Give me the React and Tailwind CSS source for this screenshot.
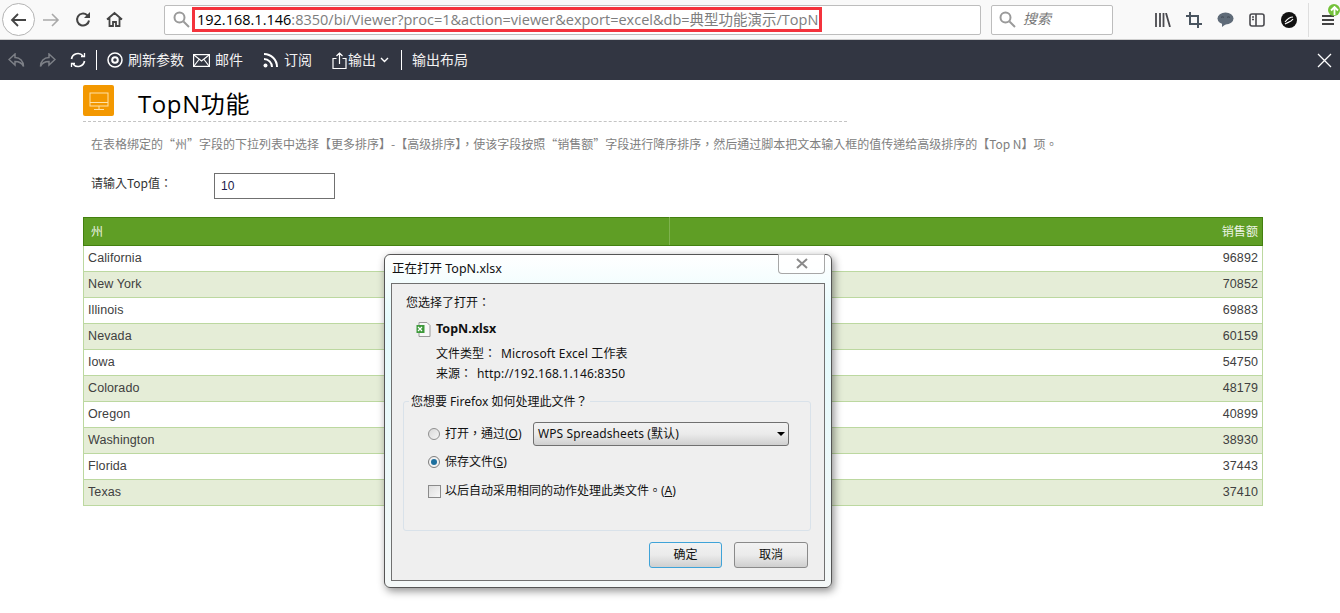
import { useState } from 'react';

const FONT = "font-['Liberation_Sans','Noto_Sans_CJK_SC',sans-serif]";

const rows = [
  ['California', '96892'],
  ['New York', '70852'],
  ['Illinois', '69883'],
  ['Nevada', '60159'],
  ['Iowa', '54750'],
  ['Colorado', '48179'],
  ['Oregon', '40899'],
  ['Washington', '38930'],
  ['Florida', '37443'],
  ['Texas', '37410'],
];

const BrowserBar = () => (
  <div className="h-10 bg-[#f9f9f9] border-b border-[#cfcfcf] flex items-center relative shrink-0">
    {/* nav buttons */}
    <div className="ml-[2px] w-[33px] h-[33px] rounded-full border border-[#b4b4b4] bg-white flex items-center justify-center">
      <svg width="18" height="18" viewBox="0 0 18 18" fill="none" stroke="#444" strokeWidth="1.8"><path d="M16 9H2M8 3 2 9l6 6" /></svg>
    </div>
    <svg className="ml-[7px]" width="18" height="18" viewBox="0 0 18 18" fill="none" stroke="#a9a9a9" strokeWidth="1.6"><path d="M1 9h15M10 3l6 6-6 6" /></svg>
    <svg className="ml-[15px]" width="17" height="17" viewBox="0 0 17 17" fill="none" stroke="#444" strokeWidth="2"><path d="M14 9.5A6 6 0 1 1 12 4l2.5 2" /><path d="M15 1v6H9" fill="#444" stroke="none" /></svg>
    <svg className="ml-[14px]" width="17" height="17" viewBox="0 0 17 17" fill="none" stroke="#444" strokeWidth="1.8"><path d="M1 8.5 8.5 2 16 8.5M3.5 7v8h3.5v-4h3v4h3.5V7" /></svg>

    {/* url box */}
    <div className="ml-[41px] w-[817px] h-[30px] bg-white border border-[#bdbdbd] rounded-[2px] flex items-center">
      <svg className="ml-[8px] shrink-0" width="17" height="17" viewBox="0 0 17 17" fill="none" stroke="#9a9a9a" strokeWidth="2"><circle cx="6.5" cy="6.5" r="5" /><path d="m10.5 10.5 5.5 5.5" /></svg>
      <div className="ml-[2px] w-[630px] h-[25px] border-[3px] border-[#f4333c] flex items-center pl-[2px] font-['Open_Sans','Noto_Sans_CJK_SC',sans-serif] text-[14.5px] whitespace-nowrap overflow-hidden text-[#7d7d7d]">
        <span className="text-black">192.168.1.146</span>:8350/bi/Viewer?proc=1&amp;action=viewer&amp;export=excel&amp;db=典型功能演示/TopN
      </div>
    </div>

    {/* search box */}
    <div className="ml-[10px] w-[122px] h-[30px] bg-white border border-[#bdbdbd] rounded-[2px] flex items-center">
      <svg className="ml-[7px]" width="17" height="17" viewBox="0 0 17 17" fill="none" stroke="#9a9a9a" strokeWidth="2"><circle cx="6.5" cy="6.5" r="5" /><path d="m10.5 10.5 5.5 5.5" /></svg>
      <span className="ml-[7px] italic text-[14px] text-[#777]">搜索</span>
    </div>

    {/* right icons */}
    <svg className="ml-[42px]" width="16" height="14" viewBox="0 0 16 14" fill="none" stroke="#4a4a4f" strokeWidth="1.8"><path d="M1 0v14M5 0v14M8.5 0v14M11 0l4 14" /></svg>
    <svg className="ml-[15px]" width="16" height="16" viewBox="0 0 16 16" fill="none" stroke="#4a5560" strokeWidth="2"><path d="M4 0v12h12M0 4h12v12" /></svg>
    <svg className="ml-[15px]" width="17" height="15" viewBox="0 0 17 15"><ellipse cx="8.5" cy="6.5" rx="8" ry="6" fill="#5f6b78" /><path d="M5 11v4l4-3z" fill="#5f6b78" /><path d="M4 5.500c1-.8 2-.8 3 0M10 5.500c1-.8 2-.8 3 0" stroke="#3d4650" fill="none" /></svg>
    <svg className="ml-[15px]" width="16" height="14" viewBox="0 0 16 14" fill="none" stroke="#4a4a4f" strokeWidth="1.6"><rect x="1" y="1" width="14" height="12" rx="2" /><path d="M7 1v12M3 4h2M3 6.5h2" /></svg>
    <svg className="ml-[16px]" width="16" height="16" viewBox="0 0 16 16"><circle cx="8" cy="8" r="8" fill="#111" /><path d="M4 10c3-4 5-5 8-5M4 12c3-2 6-2 8-5" stroke="#fff" strokeWidth="1.2" fill="none" /></svg>
    <div className="ml-[11px] w-px h-[34px] bg-[#dedede]" />
    <svg className="ml-[13px]" width="12" height="12" viewBox="0 0 12 12" stroke="#444" strokeWidth="2"><path d="M0 2h12M0 6h12M0 10h12" /></svg>
    <span className="absolute right-0 top-[4px] w-[12px] h-[12px] rounded-full bg-[#74c23a] flex items-center justify-center">
      <svg width="9" height="9" viewBox="0 0 9 9" fill="none" stroke="#fff" strokeWidth="1.8"><path d="M4.5 9V1M1 4.5 4.5 1 8 4.5" /></svg>
    </span>
  </div>
);

const ToolLabel = ({ children, className = '' }) => (
  <span className={`text-[14px] text-[#f2f2f2] whitespace-nowrap ${className}`}>{children}</span>
);

const ViewerBar = () => (
  <div className="h-10 bg-[#323642] flex items-center shrink-0">
    <svg className="ml-[8px]" width="17" height="15" viewBox="0 0 17 15" fill="none" stroke="#7d8087" strokeWidth="1.5"><path d="M7 1 1 6.5 7 12V8.5c4 0 7 1.500 8.500 5C15.500 8 12 4.500 7 4.500z" /></svg>
    <svg className="ml-[14px]" width="17" height="15" viewBox="0 0 17 15" fill="none" stroke="#7d8087" strokeWidth="1.5"><path d="M10 1l6 5.500L10 12V8.500c-4 0-7 1.500-8.500 5C1.500 8 5 4.500 10 4.500z" /></svg>
    <svg className="ml-[14px]" width="16" height="16" viewBox="0 0 16 16" fill="none" stroke="#fff" strokeWidth="1.7"><path d="M1.500 7A6.500 6.500 0 0 1 13 4M14.500 9A6.500 6.500 0 0 1 3 12" /><path d="M11 4.500h3.500V1M5 11.500H1.500V15" strokeWidth="1.300" /></svg>
    <div className="ml-[10px] w-px h-5 bg-white" />
    <svg className="ml-[10px]" width="16" height="16" viewBox="0 0 16 16" fill="none" stroke="#fff" strokeWidth="1.500"><circle cx="8" cy="8" r="7" /><circle cx="8" cy="8" r="2.800" strokeWidth="2" /></svg>
    <ToolLabel className="ml-[5px]">刷新参数</ToolLabel>
    <svg className="ml-[9px]" width="17" height="13" viewBox="0 0 17 13" fill="none" stroke="#fff" strokeWidth="1.200"><rect x="0.600" y="0.600" width="15.800" height="11.800" /><path d="m1 1 7.500 6L16 1M1 12l5-6.500M16 12l-5-6.500" /></svg>
    <ToolLabel className="ml-[5px]">邮件</ToolLabel>
    <svg className="ml-[20px]" width="16" height="16" viewBox="0 0 16 16" fill="none" stroke="#fff" strokeWidth="2"><circle cx="2.500" cy="13.500" r="2" fill="#fff" stroke="none" /><path d="M1 7a8 8 0 0 1 8 8M1 2a13 13 0 0 1 13 13" /></svg>
    <ToolLabel className="ml-[5px]">订阅</ToolLabel>
    <svg className="ml-[20px]" width="15" height="17" viewBox="0 0 15 17" fill="none" stroke="#fff" strokeWidth="1.200"><path d="M4.500 6.500H1v10h13v-10h-3.500M7.500 12V1M4.500 4l3-3 3 3" /></svg>
    <ToolLabel className="ml-[1px]">输出</ToolLabel>
    <svg className="ml-[4px]" width="9" height="6" viewBox="0 0 9 6" fill="none" stroke="#fff" strokeWidth="1.400"><path d="m1 1 3.500 3.500L8 1" /></svg>
    <div className="ml-[12px] w-px h-5 bg-white" />
    <ToolLabel className="ml-[10px]">输出布局</ToolLabel>
    <svg className="ml-auto mr-[8px]" width="15" height="15" viewBox="0 0 15 15" stroke="#fff" strokeWidth="1.300"><path d="m1 1 13 13M14 1 1 14" /></svg>
  </div>
);

const Report = () => {
  const [top, setTop] = useState('10');
  return (
    <div className="pl-[83px] pr-[77px] pt-[5px]">
      <div className="w-[764px] h-[37px] border-b border-dashed border-[#c4c4c4] flex items-start">
        <div className="w-[31px] h-[31px] bg-[#f39800] rounded-[2px] flex items-center justify-center">
          <svg width="20" height="20" viewBox="0 0 20 20" fill="none" stroke="#ffe2a8" strokeWidth="1"><rect x="1" y="2" width="18" height="13" /><path d="M1 11.500h18M10 15v3M5 18.500h10" /></svg>
        </div>
        <h1 className="ml-[24px] mt-[2px] font-['Open_Sans','Noto_Sans_CJK_SC',sans-serif] text-[24px] tracking-[0.6px] leading-[34px] text-black">TopN功能</h1>
      </div>
      <p className="ml-[8px] mt-[13px] font-['Noto_Sans_CJK_TC',sans-serif] text-[12px] leading-[17px] text-[#808080] whitespace-nowrap">
        在表格绑定的“州”字段的下拉列表中选择【更多排序】-【高级排序】，使该字段按照“销售额”字段进行降序排序，然后通过脚本把文本输入框的值传递给高级排序的【Top N】项。
      </p>
      <div className="mt-[21px] h-[26px] flex items-start">
        <label className="ml-[8px] w-[123px] font-['Noto_Sans_CJK_TC',sans-serif] text-[12px] leading-[20px] text-[#333]">请输入Top值：</label>
        <input
          value={top}
          onChange={(e) => setTop(e.target.value)}
          className="w-[121px] h-[26px] border border-[#707070] pl-[6px] text-[12px] text-[#1a1a4a] outline-none"
        />
      </div>
      <table className="mt-[18px] w-[1180px] border-collapse text-[12.5px] tracking-[0.1px] text-[#404040] table-fixed">
        <thead>
          <tr className="h-[28px] bg-[#5f9e25] text-[#eef5e5] text-[12px]">
            <th className="w-[586px] border border-[#43800f] border-r-[#7fb24e] pl-[7px] text-left font-normal">州</th>
            <th className="border border-[#43800f] border-l-[#7fb24e] pr-[4px] text-right font-normal">销售额</th>
          </tr>
        </thead>
        <tbody>
          {rows.map(([state, amount], i) => (
            <tr key={state} className={`h-[26px] ${i % 2 ? 'bg-[#e5edd7]' : 'bg-white'}`}>
              <td className="border border-[#bcd8a0] border-r-0 pl-[4px]">{state}</td>
              <td className="border border-[#bcd8a0] border-l-0 pr-[4px] text-right">{amount}</td>
            </tr>
          ))}
        </tbody>
      </table>
    </div>
  );
};

const DialogButton = ({ children, primary }) => (
  <button className={`h-[26px] rounded-[3px] border text-[12px] text-[#111] bg-gradient-to-b from-[#f2f2f2] via-[#ebebeb] to-[#cfcfcf] ${primary ? 'border-[#3fa3d8] w-[73px]' : 'border-[#8a8a8a] w-[74px]'}`}>
    {children}
  </button>
);

const Dialog = () => (
  <div className="absolute left-[384px] top-[254px] w-[448px] h-[334px] rounded-[6px] border border-[#555] shadow-[2px_3px_8px_rgba(0,0,0,0.45)] bg-gradient-to-b from-white via-[#e4fbfd] via-20% to-[#f4f8f8] flex flex-col px-[6px] pb-[6px] font-['Noto_Sans','Noto_Sans_CJK_TC',sans-serif]">
    {/* title bar */}
    <div className="h-[28px] shrink-0 flex items-start relative">
      <span className="ml-[1px] mt-[5px] text-[12.500px] leading-[17px] text-[#111]">正在打开 TopN.xlsx</span>
      <div className="absolute right-0 top-[-1px] w-[47px] h-[20px] border border-t-0 border-[#a7a7a7] rounded-b-[4px] bg-white/70 flex items-center justify-center">
        <svg width="12" height="11" viewBox="0 0 12 11" stroke="#8a8a8a" strokeWidth="2"><path d="m1 1 10 9M11 1 1 10" /></svg>
      </div>
    </div>

    {/* body */}
    <div className="flex-1 border border-[#707070] bg-[#efefef] px-[14px] text-[12px] text-[#111] flex flex-col">
      <div className="mt-[11px] leading-[16px]">您选择了打开：</div>
      <div className="mt-[10px] ml-[10px] flex items-center h-[16px]">
        <svg width="15" height="15" viewBox="0 0 15 15"><path d="M3 .5h8l3 3v11H3z" fill="#f8f8f8" stroke="#999" /><rect x="0.500" y="3" width="8" height="8" fill="#3f9a3c" /><path d="m2 5 4 4M6 5 2 9" stroke="#fff" strokeWidth="1.200" /></svg>
        <span className="ml-[5px] font-bold text-[12.500px]">TopN.xlsx</span>
      </div>
      <div className="mt-[9px] ml-[30px] leading-[16px]">文件类型：<span className="ml-[5px] tracking-[0.15px]">Microsoft Excel 工作表</span></div>
      <div className="mt-[4px] ml-[30px] leading-[16px]">来源：<span className="ml-[5px] tracking-[0.15px]">http://192.168.1.146:8350</span></div>

      {/* fieldset */}
      <fieldset className="mt-[12px] ml-[-3px] mr-[-1px] h-[137px] border border-[#d9e2ea] rounded-[3px] pl-[24px] pr-[20px]">
        <legend className="ml-[-19px] px-[2px] leading-[15px] text-[12px]">您想要 Firefox 如何处理此文件？</legend>
        <div className="mt-[13px] flex items-center h-[24px]">
          <span className="w-[12px] h-[12px] rounded-full border border-[#8f8f8f] bg-gradient-to-br from-[#d8d8d8] to-[#f5f5f5]" />
          <span className="ml-[5px] w-[88px] whitespace-nowrap">打开，通过(<u>O</u>)</span>
          <div className="w-[256px] h-[24px] border border-[#707070] rounded-[3px] bg-gradient-to-b from-[#f2f2f2] via-[#ebebeb] to-[#cfcfcf] flex items-center pl-[4px] pr-[3px]">
            <span className="tracking-[0.1px]">WPS Spreadsheets (默认)</span>
            <span className="ml-auto w-0 h-0 border-x-[4px] border-x-transparent border-t-[4px] border-t-black" />
          </div>
        </div>
        <div className="mt-[5px] flex items-center h-[22px]">
          <span className="w-[12px] h-[12px] rounded-full border border-[#7d7d7d] bg-[#f2f2f2] flex items-center justify-center">
            <span className="w-[6px] h-[6px] rounded-full bg-[#1d6f9e]" />
          </span>
          <span className="ml-[5px]">保存文件(<u>S</u>)</span>
        </div>
        <div className="mt-[7px] flex items-center h-[22px]">
          <span className="w-[13px] h-[13px] border border-[#8a8a8a] bg-gradient-to-br from-[#dedede] to-[#f7f7f7]" />
          <span className="ml-[4px]">以后自动采用相同的动作处理此类文件。(<u>A</u>)</span>
        </div>
      </fieldset>

      <div className="mt-[11px] flex justify-end gap-[12px] pr-[2px]">
        <DialogButton primary>确定</DialogButton>
        <DialogButton>取消</DialogButton>
      </div>
    </div>
  </div>
);

const App = () => (
  <div className={`relative w-[1340px] h-[613px] overflow-hidden bg-white flex flex-col ${FONT}`}>
    <BrowserBar />
    <ViewerBar />
    <Report />
    <Dialog />
  </div>
);

export default App;
